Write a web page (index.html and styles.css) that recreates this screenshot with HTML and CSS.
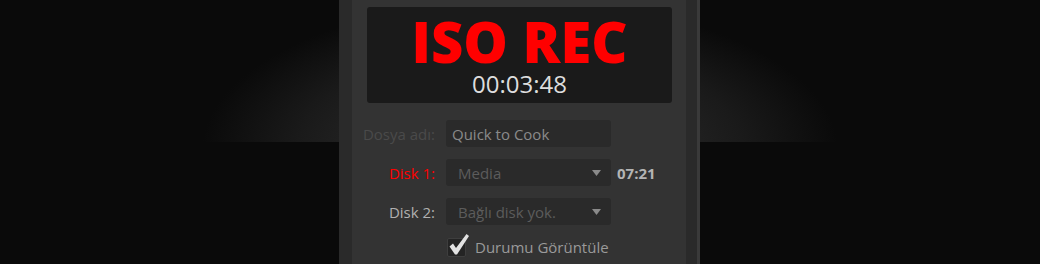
FILE: index.html
```html
<!DOCTYPE html>
<html lang="tr">
<head>
<meta charset="utf-8">
<link rel="stylesheet" href="styles.css">
</head>
<body>
<div class="stage">
  <div class="panel">
    <div class="inner">
      <div class="display">
        <div class="rec">ISO REC</div>
        <div class="time">00:03:48</div>
      </div>
      <div class="form">
        <span class="lbl dim">Dosya adı:</span>
        <div class="field">Quick to Cook</div>
        <span></span>

        <span class="lbl red">Disk 1:</span>
        <div class="select"><span>Media</span><svg class="arrow" width="9" height="6" viewBox="0 0 9 6"><path d="M0 0H9L4.5 6Z" fill="#8a8a8a"/></svg></div>
        <span class="rem">07:21</span>

        <span class="lbl">Disk 2:</span>
        <div class="select"><span>Bağlı disk yok.</span><svg class="arrow" width="9" height="6" viewBox="0 0 9 6"><path d="M0 0H9L4.5 6Z" fill="#8a8a8a"/></svg></div>
        <span></span>

        <span></span>
        <div class="check">
          <span class="box"><svg class="tick" width="22" height="24" viewBox="0 0 22 24"><path d="M1.5 13.5 L5 10.5 L8 15 L18.5 1 L21 3 L9 21.5 L7 21.5 Z" fill="#e2e2e2"/></svg></span>
          <span class="check-lbl">Durumu Görüntüle</span>
        </div>
        <span></span>
      </div>
    </div>
  </div>
</div>
</body>
</html>
```

FILE: styles.css
```css
html, body {
  margin: 0;
  padding: 0;
  background: #0a0a0a;
}
body {
  width: 1040px;
  height: 264px;
  overflow: hidden;
  font-family: "Open Sans", "Liberation Sans", sans-serif;
}
.stage {
  position: relative;
  height: 264px;
}
.stage::before {
  content: "";
  position: absolute;
  left: 0;
  top: 0;
  width: 1040px;
  height: 142px;
  background: radial-gradient(ellipse 318px 150px at 520px 150px, #2a2a2a 0%, #262626 40%, #1a1a1a 70%, #0a0a0a 100%);
}
.panel {
  position: relative;
  margin-left: 339px;
  width: 334px;
  height: 264px;
  background: #2a2a2a;
  padding-left: 13px;
  padding-right: 11px;
  border-right: 3px solid #3a3a3a;
  display: flex;
}
.inner {
  flex: 1;
  background: #333333;
  padding-top: 7px;
}
.display {
  margin-left: 15px;
  width: 305px;
  height: 96px;
  box-sizing: border-box;
  background: #1a1a1a;
  border-radius: 3px;
  padding-top: 5px;
  text-align: center;
}
.rec {
  color: #ff0000;
  font-weight: 800;
  font-size: 56px;
  line-height: 58px;
}
.time {
  color: #dddddd;
  font-size: 24px;
  line-height: 24px;
  margin-top: 2px;
}
.form {
  margin-top: 17px;
  display: grid;
  grid-template-columns: 83px 165px auto;
  grid-template-rows: 27px 27px 27px 20px;
  column-gap: 11px;
  row-gap: 12px;
  align-items: center;
  font-size: 15px;
}
.lbl {
  text-align: right;
  color: #b0b0b0;
}
.lbl.dim { color: #4a4a4a; }
.lbl.red { color: #ff0000; }
.field, .select {
  height: 27px;
  box-sizing: border-box;
  background: #2a2a2a;
  border-radius: 3px;
  display: flex;
  align-items: center;
}
.field {
  padding-left: 6px;
  color: #8a8a8a;
}
.select {
  padding-left: 12px;
  padding-right: 10px;
  color: #5c5c5c;
  justify-content: space-between;
}
.arrow { display: block; }
.rem {
  margin-left: -5px;
  color: #b4b4b4;
  font-weight: 700;
}
.check {
  display: flex;
  align-items: center;
  gap: 9px;
}
.box {
  position: relative;
  width: 19px;
  height: 19px;
  box-sizing: border-box;
  background: #242424;
  border: 1px solid #3e3e3e;
  border-radius: 2px;
  margin-left: 1px;
}
.tick {
  position: absolute;
  left: 0px;
  top: -6px;
}
.check-lbl {
  color: #9a9a9a;
}
```
